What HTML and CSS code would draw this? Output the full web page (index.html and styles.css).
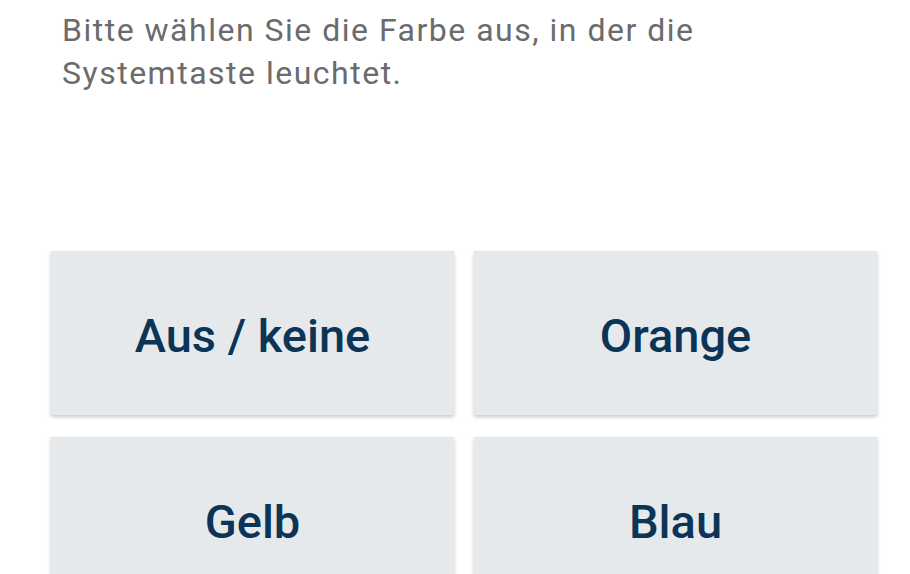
FILE: index.html
```html
<!DOCTYPE html>
<html lang="de">
<head>
<meta charset="utf-8">
<link rel="stylesheet" href="styles.css">
</head>
<body>
<div class="page">
  <p class="intro">Bitte wählen Sie die Farbe aus, in der die Systemtaste leuchtet.</p>
  <div class="grid">
    <button class="opt">Aus / keine</button>
    <button class="opt">Orange</button>
    <button class="opt">Gelb</button>
    <button class="opt">Blau</button>
  </div>
</div>
</body>
</html>
```
FILE: styles.css
```css
html, body {
  margin: 0;
  padding: 0;
  background: #ffffff;
  overflow: hidden;
}
.page {
  width: 910px;
  height: 574px;
  padding: 0 33px 0 51px;
  box-sizing: border-box;
}
.intro {
  margin: 0;
  padding: 9px 0 0 11px;
  width: 700px;
  font-family: Roboto, "Noto Sans", sans-serif;
  font-size: 32px;
  letter-spacing: 1.5px;
  line-height: 43px;
  color: #6b6b6b;
}
.grid {
  margin-top: 156px;
  display: grid;
  grid-template-columns: 403px 403px;
  grid-auto-rows: 164px;
  column-gap: 20px;
  row-gap: 22px;
}
.opt {
  border: none;
  margin: 0;
  padding: 4px 0 0 0;
  background: #e5e9ec;
  box-shadow: 0 2px 4px rgba(0, 0, 0, 0.22);
  font-family: Roboto, "Noto Sans", sans-serif;
  font-weight: 500;
  font-size: 47px;
  color: #0c3457;
  display: flex;
  align-items: center;
  justify-content: center;
}
```
